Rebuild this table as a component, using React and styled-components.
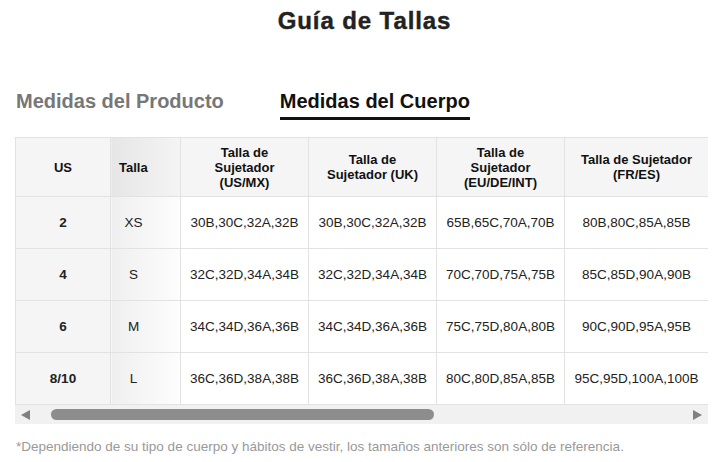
import React from 'react';
import styled, { createGlobalStyle } from 'styled-components';

const GlobalStyle = createGlobalStyle`
  body {
    margin: 0;
    background: #fff;
    font-family: "Liberation Sans", Arial, sans-serif;
    color: #222;
  }
`;

const Page = styled.div`
  width: 725px;
  padding: 7px 17px 0 15px;
  box-sizing: border-box;
`;

const Title = styled.h1`
  margin: 0;
  text-align: center;
  font-size: 24px;
  line-height: 28px;
  letter-spacing: 0.9px;
  font-weight: 700;
  color: #222;
  padding-left: 6px;
  -webkit-text-stroke: 0.4px #222;
`;

const Tabs = styled.div`
  display: flex;
  gap: 56px;
  margin-top: 54px;
  padding-left: 1px;
`;

const Tab = styled.div`
  font-size: 20px;
  line-height: 24px;
  font-weight: 700;
  padding-bottom: 4px;
  color: ${(p) => (p.$active ? '#111' : '#777')};
  border-bottom: 3px solid ${(p) => (p.$active ? '#111' : 'transparent')};
`;

const TableScroll = styled.div`
  margin-top: 17px;
  width: 693px;
  overflow: hidden;
`;

const Table = styled.table`
  width: 693px;
  table-layout: fixed;
  border-collapse: collapse;
  border: 1px solid #e2e2e2;
`;

const Th = styled.th`
  height: 58px;
  padding: 0 10px;
  font-size: 13px;
  line-height: 15px;
  font-weight: 700;
  color: #111;
  text-align: center;
  border: 1px solid #e2e2e2;
  background: #f5f5f5;
`;

const SizeTh = styled(Th)`
  text-align: left;
  padding: 0 28px 0 8px;
  background: linear-gradient(to right, #e6e6e6, #f4f4f4);
`;

const Td = styled.td`
  height: 51px;
  padding: 0 6px;
  font-size: 13.5px;
  color: #222;
  text-align: center;
  white-space: nowrap;
  border: 1px solid #e2e2e2;
  background: ${(p) => (p.$shade ? '#f5f5f5' : '#fff')};
  font-weight: ${(p) => (p.$bold ? 700 : 400)};
`;

const SizeTd = styled(Td)`
  padding: 0 24px 0 0;
  background: linear-gradient(to right, #efefef, #fdfdfd);
`;

const ScrollTrack = styled.div`
  display: flex;
  align-items: center;
  width: 693px;
  height: 19px;
  padding: 0 6px;
  box-sizing: border-box;
  background: #f1f1f1;
`;

const Arrow = styled.span`
  width: 0;
  height: 0;
  border-top: 5px solid transparent;
  border-bottom: 5px solid transparent;
  ${(p) =>
    p.$dir === 'left'
      ? 'border-right: 9px solid #808080;'
      : 'border-left: 9px solid #808080;'}
`;

const Thumb = styled.div`
  margin-left: 21px;
  height: 11px;
  border-radius: 6px;
  background: #8d8d8d;
`;

const Spacer = styled.div`
  flex: 1;
`;

const Note = styled.p`
  margin: 15px 0 0 1px;
  font-size: 13.5px;
  line-height: 16px;
  color: #999;
`;

const columns = [95, 70, 128, 128, 128, 144];

const headers = [
  'Talla de Sujetador (US/MX)',
  'Talla de Sujetador (UK)',
  'Talla de Sujetador (EU/DE/INT)',
  'Talla de Sujetador (FR/ES)',
];

const rows = [
  ['2', 'XS', '30B,30C,32A,32B', '30B,30C,32A,32B', '65B,65C,70A,70B', '80B,80C,85A,85B'],
  ['4', 'S', '32C,32D,34A,34B', '32C,32D,34A,34B', '70C,70D,75A,75B', '85C,85D,90A,90B'],
  ['6', 'M', '34C,34D,36A,36B', '34C,34D,36A,36B', '75C,75D,80A,80B', '90C,90D,95A,95B'],
  ['8/10', 'L', '36C,36D,38A,38B', '36C,36D,38A,38B', '80C,80D,85A,85B', '95C,95D,100A,100B'],
];

const App = () => (
  <Page>
    <GlobalStyle />
    <Title>Guía de Tallas</Title>
    <Tabs>
      <Tab>Medidas del Producto</Tab>
      <Tab $active>Medidas del Cuerpo</Tab>
    </Tabs>
    <TableScroll>
      <Table>
        <colgroup>
          {columns.map((w, i) => (
            <col key={i} style={{ width: w }} />
          ))}
        </colgroup>
        <thead>
          <tr>
            <Th>US</Th>
            <SizeTh>Talla</SizeTh>
            {headers.map((h) => (
              <Th key={h}>{h}</Th>
            ))}
          </tr>
        </thead>
        <tbody>
          {rows.map(([us, size, ...rest]) => (
            <tr key={us}>
              <Td $shade $bold>{us}</Td>
              <SizeTd>{size}</SizeTd>
              {rest.map((v, i) => (
                <Td key={i}>{v}</Td>
              ))}
            </tr>
          ))}
        </tbody>
      </Table>
    </TableScroll>
    <ScrollTrack>
      <Arrow $dir="left" />
      <Thumb style={{ width: 383 }} />
      <Spacer />
      <Arrow $dir="right" />
    </ScrollTrack>
    <Note>
      *Dependiendo de su tipo de cuerpo y hábitos de vestir, los tamaños anteriores son sólo de referencia.
    </Note>
  </Page>
);

export default App;
